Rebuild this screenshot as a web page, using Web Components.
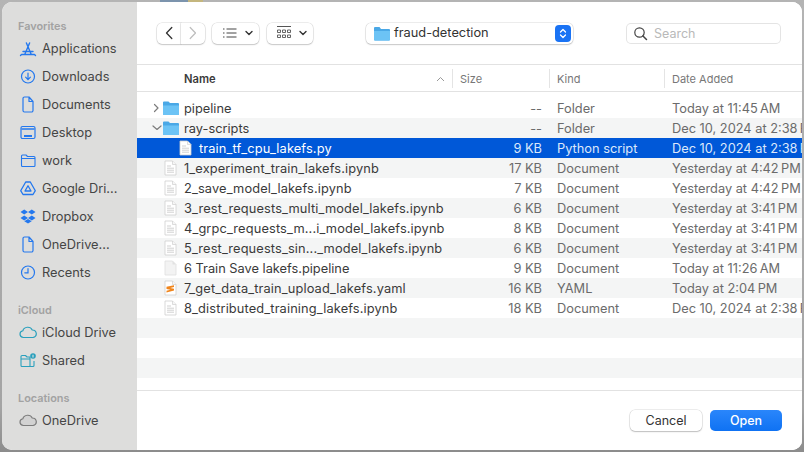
<!DOCTYPE html>
<html>
<head>
<meta charset="utf-8">
<title>Open</title>
<style>
  html, body { margin: 0; height: 100%; }
  body {
    width: 804px; height: 452px; overflow: hidden;
    font-family: "Inter", "Liberation Sans", sans-serif;
    background:
      linear-gradient(90deg, transparent 160px, #7c94ad 160px, #7c94ad 188px, #c4b67e 188px, #c4b67e 203px, transparent 203px) 0 0 / 100% 2px no-repeat,
      linear-gradient(#b4b4b4, #a4a4a4 90%, #8c8c8c);
  }
</style>
</head>
<body>
<file-dialog>
  <side-bar slot="side"></side-bar>
  <tool-bar slot="tools"></tool-bar>
  <file-table slot="table"></file-table>
  <dialog-footer slot="footer"></dialog-footer>
</file-dialog>

<script>
const ICONS = {
  apps: '<path d="M2.500 15.500h13M5.700 15.500 10.600 4M12.300 15.500 7.400 4M4 12.500h10M2.500 15.500 1.500 16.500M15.500 15.500l1 1" fill="none" stroke="currentColor" stroke-width="1.400" stroke-linecap="round"/>',
  download: '<circle cx="9" cy="9.500" r="6.500" fill="none" stroke="currentColor" stroke-width="1.200"/><path d="M9 6v6.500M6.600 10.200 9 12.600l2.400-2.400" fill="none" stroke="currentColor" stroke-width="1.200" stroke-linecap="round"/>',
  doc: '<path d="M4 3.500a1.500 1.500 0 0 1 1.500-1.500H10l4 4.500v9a1.500 1.500 0 0 1-1.500 1.500h-7A1.500 1.500 0 0 1 4 15.500zM10 2v4.500h4" fill="none" stroke="currentColor" stroke-width="1.200" stroke-linejoin="round"/>',
  desktop: '<rect x="2" y="3.500" width="14" height="12" rx="1.500" fill="none" stroke="currentColor" stroke-width="1.200"/><path d="M2.500 6h13" stroke="currentColor" stroke-width="1.600"/><path d="M5 13h8" stroke="currentColor" stroke-width="1.800"/>',
  folder: '<path d="M2.500 5a1 1 0 0 1 1-1h3.500l1.500 1.500h6.500a1 1 0 0 1 1 1v8a1 1 0 0 1-1 1h-11.500a1 1 0 0 1-1-1zM2.500 7.500h13" fill="none" stroke="currentColor" stroke-width="1.100" stroke-linejoin="round"/>',
  gdrive: '<path d="M6.700 3h4.600l5 8.700-2.300 3.800H4l-2.300-3.800z" fill="none" stroke="currentColor" stroke-width="1.300" stroke-linejoin="round"/><path d="M9 6.800 12 12H6z" fill="none" stroke="currentColor" stroke-width="1.300" stroke-linejoin="round"/>',
  dropbox: '<path d="M5.200 2.500 9 5 5.200 7.500 1.500 5zM12.800 2.500 16.500 5l-3.700 2.500L9 5zM5.200 8.500 9 11l-3.800 2.400L1.500 11zM12.800 8.500 16.500 11l-3.700 2.400L9 11zM5.300 14.200 9 11.900l3.700 2.300L9 16.500z" fill="currentColor"/>',
  clock: '<circle cx="9" cy="9.500" r="6.500" fill="none" stroke="currentColor" stroke-width="1.200"/><path d="M9 5.500v4.300H5.800" fill="none" stroke="currentColor" stroke-width="1.200" stroke-linecap="round"/>',
  cloud: '<path d="M5 14.500a3.400 3.400 0 0 1-.5-6.700 4.600 4.600 0 0 1 8.700-.8 3.800 3.800 0 0 1 .8 7.500z" transform="translate(-1 0) scale(1.080 1)" fill="none" stroke="currentColor" stroke-width="1.100" stroke-linejoin="round"/>',
  shared: '<path d="M2 5.500a1 1 0 0 1 1-1h3.500L8 6h3v9.500H3a1 1 0 0 1-1-1zM2 8h9M11 15.500h3a1 1 0 0 0 1-1V10" fill="none" stroke="currentColor" stroke-width="1.100" stroke-linejoin="round"/><circle cx="14" cy="5" r="2.800" fill="currentColor"/><path d="M14 3.800v2.600" stroke="#dcdcdc" stroke-width="1.200"/>',
  clouddrive: '<path d="M5 14.500a3.400 3.400 0 0 1-.5-6.700 4.600 4.600 0 0 1 8.700-.8 3.800 3.800 0 0 1 .8 7.500z" transform="translate(-1 0) scale(1.080 1)" fill="#d2d2d2" stroke="currentColor" stroke-width="1.100" stroke-linejoin="round"/>'
};

class SideItem extends HTMLElement {
  connectedCallback() {
    const color = this.getAttribute('color') || '#2478ee';
    this.attachShadow({ mode: 'open' }).innerHTML = `
      <style>
        :host { display: flex; align-items: center; height: 28px; padding-left: 17px; gap: 5px; font-size: 12.800px; color: #454545; white-space: nowrap; }
        svg { width: 18px; height: 18px; color: ${color}; flex: none; }
      </style>
      <svg viewBox="0 0 18 18">${ICONS[this.getAttribute('icon')]}</svg>
      <span><slot></slot></span>`;
  }
}

class SideHead extends HTMLElement {
  connectedCallback() {
    this.attachShadow({ mode: 'open' }).innerHTML = `
      <style>
        :host { display: block; height: 14px; line-height: 14px; padding-left: 16px; font-size: 10.900px; font-weight: 600; color: #a2a2a2; }
      </style><slot></slot>`;
  }
}

class SideBar extends HTMLElement {
  connectedCallback() {
    this.attachShadow({ mode: 'open' }).innerHTML = `
      <style>
        :host { display: block; height: 100%; box-sizing: border-box; padding-top: 17px; background: #dddddc; }
        .group { margin-bottom: 17px; }
        .items { margin-top: 1px; }
      </style>
      <div class="group">
        <side-head>Favorites</side-head>
        <div class="items">
          <side-item icon="apps">Applications</side-item>
          <side-item icon="download">Downloads</side-item>
          <side-item icon="doc">Documents</side-item>
          <side-item icon="desktop">Desktop</side-item>
          <side-item icon="folder">work</side-item>
          <side-item icon="gdrive">Google Dri...</side-item>
          <side-item icon="dropbox">Dropbox</side-item>
          <side-item icon="doc">OneDrive...</side-item>
          <side-item icon="clock">Recents</side-item>
        </div>
      </div>
      <div class="group">
        <side-head>iCloud</side-head>
        <div class="items">
          <side-item icon="cloud" color="#2aa0bd">iCloud Drive</side-item>
          <side-item icon="shared" color="#2aa0bd">Shared</side-item>
        </div>
      </div>
      <div class="group">
        <side-head>Locations</side-head>
        <div class="items">
          <side-item icon="clouddrive" color="#7c7c7c">OneDrive</side-item>
        </div>
      </div>`;
  }
}

class ToolBar extends HTMLElement {
  connectedCallback() {
    this.attachShadow({ mode: 'open' }).innerHTML = `
      <style>
        :host { display: flex; align-items: center; height: 63px; box-sizing: border-box; padding: 0 21px 0 20px; border-bottom: 1px solid #e2e2e2; background: #fff; flex: none; }
        .btn { display: flex; align-items: center; justify-content: center; height: 21px; background: #fff; border-radius: 5px; box-shadow: 0 0 0 .5px rgba(0,0,0,.14), 0 1px 1.500px rgba(0,0,0,.16); }
        .nav { width: 24px; }
        .nav.l { border-radius: 5px 0 0 5px; }
        .nav.r { border-radius: 0 5px 5px 0; margin-right: 7px; }
        .view { width: 47px; box-sizing: border-box; justify-content: flex-start; gap: 8px; padding-left: 11px; }
        .view.two { width: 46px; margin-right: 53px; margin-left: 8px; padding-left: 10px; }
        .path { width: 207px; justify-content: flex-start; padding-left: 8px; box-sizing: border-box; gap: 4px; font-size: 12.800px; color: #333; position: relative; }
        .path span { margin-top: -1px; }
        .stepper { position: absolute; right: 2px; top: 2px; width: 16px; height: 17px; border-radius: 4px; background: #1a73f4; display: flex; align-items: center; justify-content: center; }
        .search { width: 155px; margin-left: auto; justify-content: flex-start; padding-left: 7px; box-sizing: border-box; gap: 6px; font-size: 12.500px; color: #b9b9b9; box-shadow: inset 0 0 0 1px #e4e4e4; }
        svg { display: block; }
      </style>
      <div class="btn nav l"><svg width="10" height="14" viewBox="0 0 10 14"><path d="M7.800 1.500 2.500 7l5.300 5.500" fill="none" stroke="#333" stroke-width="1.300" stroke-linecap="round" stroke-linejoin="round"/></svg></div>
      <div class="btn nav r"><svg width="10" height="14" viewBox="0 0 10 14"><path d="M2.200 1.500 7.500 7l-5.300 5.500" fill="none" stroke="#bdbdbd" stroke-width="1.200" stroke-linecap="round" stroke-linejoin="round"/></svg></div>
      <div class="btn view"><svg width="14" height="10" viewBox="0 0 14 10"><path d="M3.500 1h10M3.500 5h10M3.500 9h10M0 1h1.500M0 5h1.500M0 9h1.500" stroke="#444" stroke-width="1"/></svg><svg width="8" height="6" viewBox="0 0 8 6"><path d="M1 1.500l3 3 3-3" fill="none" stroke="#333" stroke-width="1.400" stroke-linecap="round" stroke-linejoin="round"/></svg></div>
      <div class="btn view two"><svg width="14" height="14" viewBox="0 0 14 14"><path d="M0 .5h14" stroke="#555"/><path d="M.5 4h3v2.500h-3zM5.500 4h3v2.500h-3zM10.500 4h3v2.500h-3zM.5 9h3v2.500h-3zM5.500 9h3v2.500h-3zM10.500 9h3v2.500h-3z" fill="none" stroke="#555" stroke-width=".9"/></svg><svg width="8" height="6" viewBox="0 0 8 6"><path d="M1 1.500l3 3 3-3" fill="none" stroke="#333" stroke-width="1.400" stroke-linecap="round" stroke-linejoin="round"/></svg></div>
      <div class="btn path">
        <svg width="16" height="15" viewBox="0 0 16 15"><path d="M0 2a1 1 0 0 1 1-1h4.500L7 3h8a1 1 0 0 1 1 1v9.500a1 1 0 0 1-1 1H1a1 1 0 0 1-1-1z" fill="#4aa8e6"/><path d="M0 5h16v8.500a1 1 0 0 1-1 1H1a1 1 0 0 1-1-1z" fill="#6cc3f5"/></svg>
        <span>fraud-detection</span>
        <div class="stepper"><svg width="8" height="13" viewBox="0 0 8 13"><path d="M1.500 5 4 2.500 6.500 5M1.500 8 4 10.500 6.500 8" fill="none" stroke="#fff" stroke-width="1.300" stroke-linecap="round" stroke-linejoin="round"/></svg></div>
      </div>
      <div class="btn search"><svg width="15" height="15" viewBox="0 0 15 15"><circle cx="6.500" cy="6.500" r="4.700" fill="none" stroke="#444" stroke-width="1.200"/><path d="M10 10l3.500 3.500" stroke="#444" stroke-width="1.500" stroke-linecap="round"/></svg><span>Search</span></div>`;
  }
}

const FILE_ICONS = {
  folder: `<svg width="18" height="16" viewBox="0 0 18 16"><path d="M1 2.500a1 1 0 0 1 1-1h4.500L8 3h8a1 1 0 0 1 1 1v10a1 1 0 0 1-1 1H2a1 1 0 0 1-1-1z" fill="#4aa8e6"/><path d="M1 5.500h16V14a1 1 0 0 1-1 1H2a1 1 0 0 1-1-1z" fill="#6cc3f5"/></svg>`,
  text: `<svg width="13" height="16" viewBox="0 0 13 16"><path d="M1 1h7.500L12 4.500V15H1z" fill="#fff" stroke="#cfcfcf" stroke-width=".8" stroke-linejoin="round"/><path d="M8.500 1v3.500H12" fill="#f6f6f6" stroke="#cfcfcf" stroke-width=".7"/><path d="M3 6h4M3 8.200h7M3 10.200h7M3 12.200h7" stroke="#bdbdbd" stroke-width=".7"/></svg>`,
  plain: `<svg width="13" height="16" viewBox="0 0 13 16"><path d="M1 1h7.500L12 4.500V15H1z" fill="#f3f3f3" stroke="#dedede" stroke-width=".8" stroke-linejoin="round"/><path d="M8.500 1v3.500H12z" fill="#e2e2e2"/></svg>`,
  yaml: `<svg width="13" height="16" viewBox="0 0 13 16"><path d="M1 1h7.500L12 4.500V15H1z" fill="#fff" stroke="#cfcfcf" stroke-width=".8" stroke-linejoin="round"/><path d="M8.500 1v3.500H12" fill="#f6f6f6" stroke="#cfcfcf" stroke-width=".7"/><path d="M2.500 6.800l7.500-1.600v1.700L6.200 8l3.800.8v1.800l-7.500 2v-1.800L6.500 9.800 2.500 9z" fill="#f0851c"/></svg>`
};

class FileRow extends HTMLElement {
  connectedCallback() {
    const a = n => this.getAttribute(n) || '';
    const arrow = a('arrow');
    const chev = arrow === 'right'
      ? '<path d="M2.500 1.500 6 5 2.500 8.500" fill="none" stroke="#7c7c7c" stroke-width="1.200" stroke-linecap="round" stroke-linejoin="round"/>'
      : arrow === 'down' ? '<path d="M1 3l4 3.500L9 3" fill="none" stroke="#7c7c7c" stroke-width="1.200" stroke-linecap="round" stroke-linejoin="round"/>' : '';
    const isFolder = a('icon') === 'folder';
    const spacing = this.textContent.includes('_') ? '.14px' : '0';
    this.attachShadow({ mode: 'open' }).innerHTML = `
      <style>
        :host { display: grid; grid-template-columns: 315px 97px 115px 1fr; align-items: center; height: 20px; font-size: 12.800px; color: #6b6b6b; white-space: nowrap; overflow: hidden; background: #fff; }
        :host([alt]) { background: #f4f5f5; }
        :host([selected]) { background: #0058d8; color: #dce8fb; }
        .name { display: flex; align-items: center; color: #3a3a3a; letter-spacing: ${spacing}; padding-left: ${isFolder ? 15 : 27}px; }
        :host([selected]) .name { color: #fff; padding-left: 42px; }
        .chev { width: 10px; height: 10px; flex: none; }
        .ic { flex: none; margin-right: ${isFolder ? 4 : 7}px; display: block; }
        .size { text-align: right; padding-right: 7px; }
        .kind { padding-left: 8px; }
        .date { padding-left: 8px; }
      </style>
      <div class="name">${arrow ? `<svg class="chev" viewBox="0 0 10 10">${chev}</svg>` : ''}${FILE_ICONS[a('icon')].replace('<svg', '<svg class="ic"')}<span><slot></slot></span></div>
      <div class="size">${a('size')}</div>
      <div class="kind">${a('kind')}</div>
      <div class="date">${a('date')}</div>`;
  }
}

class FileTable extends HTMLElement {
  connectedCallback() {
    this.attachShadow({ mode: 'open' }).innerHTML = `
      <style>
        :host { display: flex; flex-direction: column; flex: 1; min-height: 0; background: #fff; }
        .head { display: grid; grid-template-columns: 315px 97px 115px 1fr; height: 27px; box-sizing: border-box; align-items: center; border-bottom: 1px solid #e2e2e2; font-size: 11px; color: #777; flex: none; }
        .head div { height: 19px; line-height: 21px; padding-left: 7px; border-left: 1px solid #e4e4e4; position: relative; }
        .head div:first-child { border: 0; padding-left: 47px; font-size: 11.200px; font-weight: 600; color: #3a3a3a; }
        .sort { position: absolute; right: 7px; top: 7px; }
        .rows { flex: 1; padding-top: 6px; }
        .stripe { height: 20px; }
        .stripe.a { background: #f4f5f5; }
      </style>
      <div class="head">
        <div>Name<svg class="sort" width="9" height="6" viewBox="0 0 9 6"><path d="M1 5l3.500-3.500L8 5" fill="none" stroke="#999" stroke-width="1"/></svg></div>
        <div>Size</div><div>Kind</div><div>Date Added</div>
      </div>
      <div class="rows">
        <file-row arrow="right" icon="folder" size="--" kind="Folder" date="Today at 11:45&#8239;AM">pipeline</file-row>
        <file-row alt arrow="down" icon="folder" size="--" kind="Folder" date="Dec 10, 2024 at 2:38&#8239;PM">ray-scripts</file-row>
        <file-row selected icon="text" size="9 KB" kind="Python script" date="Dec 10, 2024 at 2:38&#8239;PM">train_tf_cpu_lakefs.py</file-row>
        <file-row alt icon="text" size="17 KB" kind="Document" date="Yesterday at 4:42&#8239;PM">1_experiment_train_lakefs.ipynb</file-row>
        <file-row icon="text" size="7 KB" kind="Document" date="Yesterday at 4:42&#8239;PM">2_save_model_lakefs.ipynb</file-row>
        <file-row alt icon="text" size="6 KB" kind="Document" date="Yesterday at 3:41&#8239;PM">3_rest_requests_multi_model_lakefs.ipynb</file-row>
        <file-row icon="text" size="8 KB" kind="Document" date="Yesterday at 3:41&#8239;PM">4_grpc_requests_m...i_model_lakefs.ipynb</file-row>
        <file-row alt icon="text" size="6 KB" kind="Document" date="Yesterday at 3:41&#8239;PM">5_rest_requests_sin..._model_lakefs.ipynb</file-row>
        <file-row icon="plain" size="9 KB" kind="Document" date="Today at 11:26&#8239;AM">6 Train Save lakefs.pipeline</file-row>
        <file-row alt icon="yaml" size="16 KB" kind="YAML" date="Today at 2:04&#8239;PM">7_get_data_train_upload_lakefs.yaml</file-row>
        <file-row icon="text" size="18 KB" kind="Document" date="Dec 10, 2024 at 2:38&#8239;PM">8_distributed_training_lakefs.ipynb</file-row>
        <div class="stripe a"></div>
        <div class="stripe"></div>
        <div class="stripe a"></div>
      </div>`;
  }
}

class DialogFooter extends HTMLElement {
  connectedCallback() {
    this.attachShadow({ mode: 'open' }).innerHTML = `
      <style>
        :host { display: flex; justify-content: flex-end; align-items: flex-start; gap: 8px; height: 61px; box-sizing: border-box; padding: 19px 20px 0 0; border-top: 1px solid #e2e2e2; background: #fff; flex: none; font-size: 12.500px; }
        div { height: 21px; line-height: 21px; text-align: center; border-radius: 5px; width: 72px; }
        .cancel { color: #333; background: #fff; box-shadow: 0 0 0 .5px rgba(0,0,0,.14), 0 1px 1.500px rgba(0,0,0,.2); }
        .open { color: #fff; background: linear-gradient(#2a86fb, #0f72f3); font-weight: 500; }
      </style>
      <div class="cancel">Cancel</div>
      <div class="open">Open</div>`;
  }
}

class FileDialog extends HTMLElement {
  constructor() {
    super();
    this.attachShadow({ mode: 'open' }).innerHTML = `
      <style>
        :host { display: block; width: 804px; height: 452px; box-sizing: border-box; padding: 2px; }
        .win { display: grid; grid-template-columns: 135px 1fr; height: 100%; border-radius: 10px; overflow: hidden; background: #fff; }
        .main { display: flex; flex-direction: column; min-width: 0; min-height: 0; background: #fff; }
      </style>
      <div class="win">
        <slot name="side"></slot>
        <div class="main">
          <slot name="tools"></slot>
          <slot name="table"></slot>
          <slot name="footer"></slot>
        </div>
      </div>`;
  }
}

customElements.define('side-item', SideItem);
customElements.define('side-head', SideHead);
customElements.define('side-bar', SideBar);
customElements.define('tool-bar', ToolBar);
customElements.define('file-row', FileRow);
customElements.define('file-table', FileTable);
customElements.define('dialog-footer', DialogFooter);
customElements.define('file-dialog', FileDialog);
</script>
</body>
</html>
